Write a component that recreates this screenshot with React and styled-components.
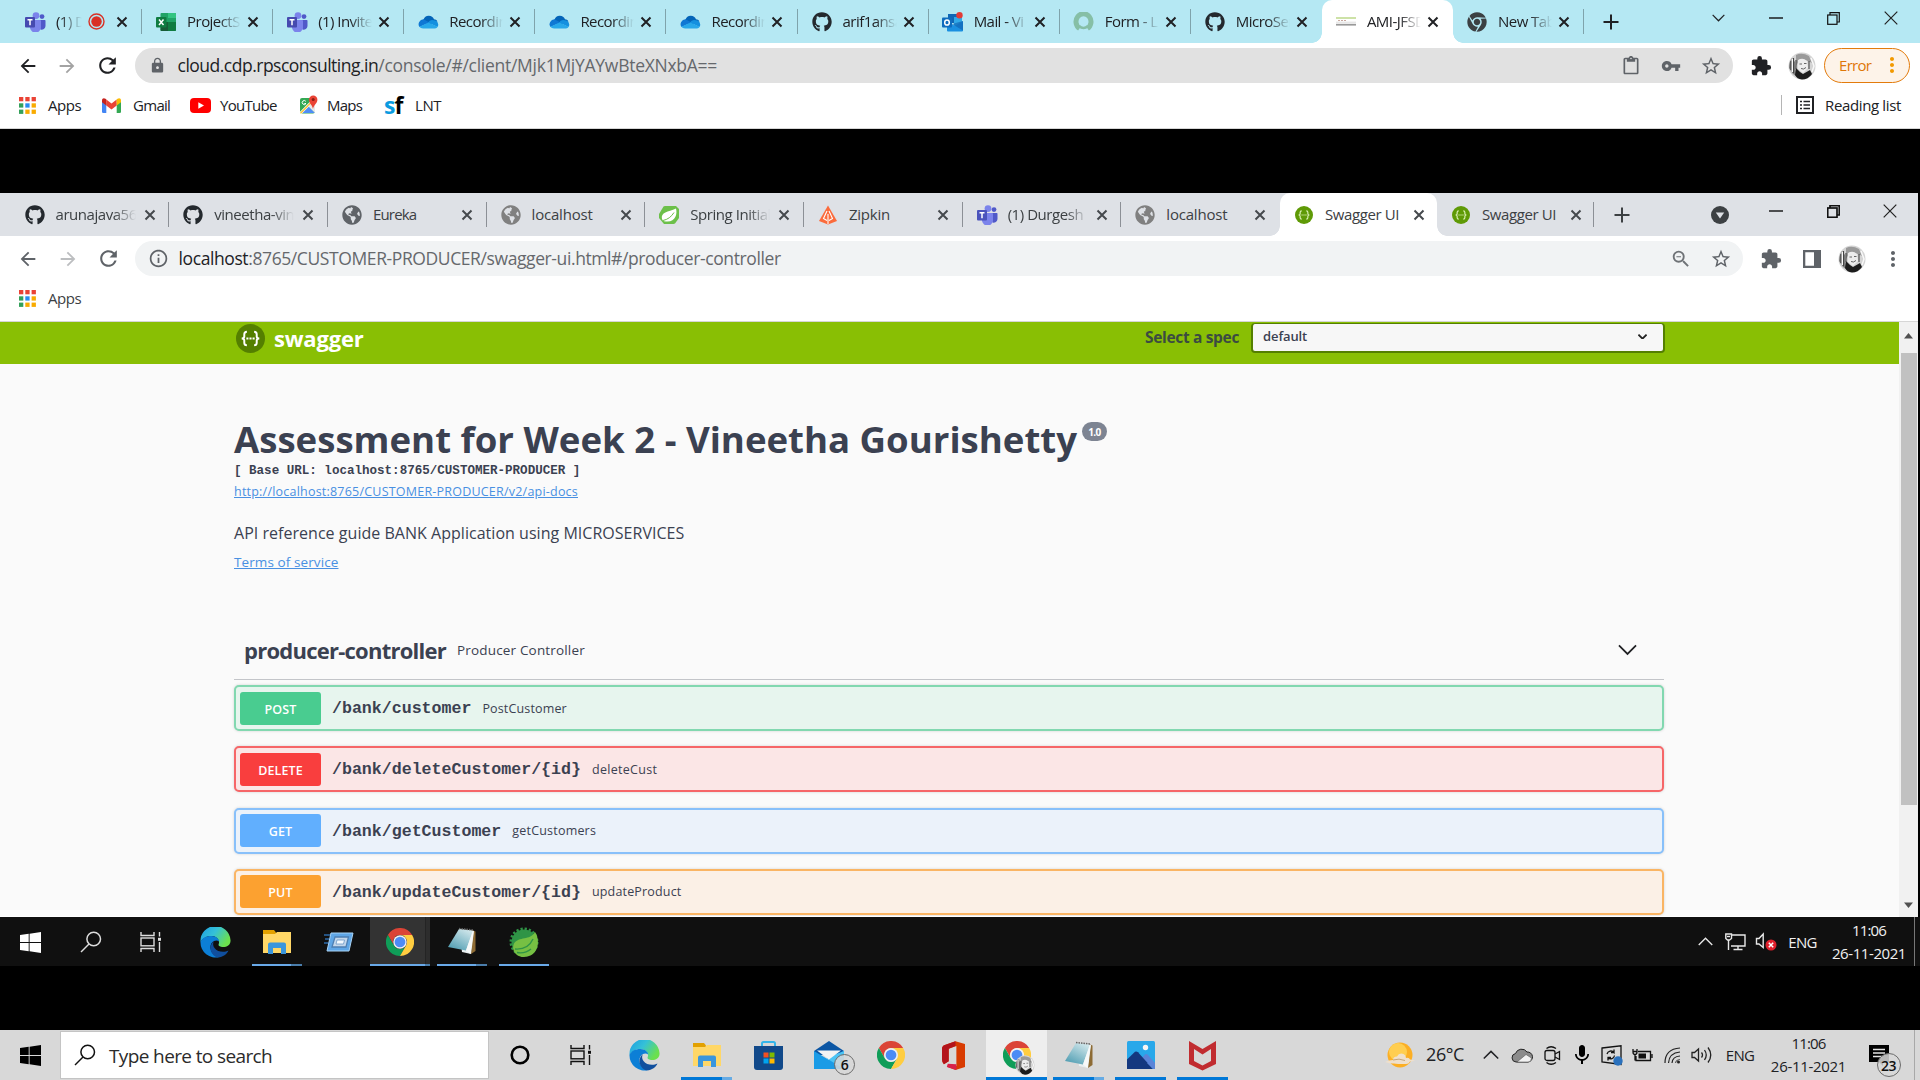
import React from "react";
import styled, { createGlobalStyle } from "styled-components";
import { FaGithub, FaChrome, FaGlobeAmericas } from "react-icons/fa";
import {
  MdLock, MdStarBorder, MdVpnKey, MdExtension, MdMoreVert, MdInfoOutline, MdZoomOut,
  MdContentPaste, MdArrowBack, MdArrowForward, MdRefresh, MdMic,
} from "react-icons/md";

const Global = createGlobalStyle`
  * { box-sizing: border-box; }
  html, body { margin: 0; padding: 0; background: #000; }
  body { font-family: "Open Sans", "Noto Sans", sans-serif; overflow: hidden; }
  svg { display: block; flex: none; }
`;

/* ---------- shared pieces ---------- */
const Screen = styled.div`
  width: 1920px;
  height: 1080px;
  display: flex;
  flex-direction: column;
  background: #000;
  overflow: hidden;
`;
const Text = styled.span`
  font-size: ${(p) => p.$size || 15}px;
  letter-spacing: ${(p) => p.$ls ?? -0.45}px;
  font-weight: ${(p) => p.$weight || 400};
  color: ${(p) => p.$color || "#202124"};
  line-height: 1.2;
  white-space: pre;
`;
const Cell = styled.div`
  display: flex;
  align-items: center;
  justify-content: center;
  flex: none;
  width: ${(p) => p.$w}px;
  color: ${(p) => p.$color || "inherit"};
  font-size: ${(p) => p.$size || 20}px;
`;
const Spacer = styled.div`
  flex: 1;
`;

/* ---------- browser windows ---------- */
const Browser = styled.section`
  display: flex;
  flex-direction: column;
  flex: none;
  width: ${(p) => p.$w || 1920}px;
  height: ${(p) => p.$h}px;
  background: #fff;
  overflow: hidden;
`;
const TabStrip = styled.div`
  display: flex;
  flex: none;
  height: 43px;
  padding-left: ${(p) => p.$pl || 11}px;
  background: ${(p) => p.$bg};
`;
const Tab = styled.div`
  position: relative;
  display: flex;
  align-items: center;
  flex: none;
  width: ${(p) => p.$w}px;
  height: 43px;
  padding-left: 12px;
  background: ${(p) => (p.$active ? "#fff" : "transparent")};
  border-radius: 10px 10px 0 0;
  ${(p) => p.$line && `
    &::after {
      content: "";
      position: absolute;
      right: 0;
      top: 9px;
      width: 1px;
      height: 25px;
      background: ${p.$lineColor};
    }
  `}
  ${(p) => p.$active && `
    &::before, &::after {
      content: "";
      position: absolute;
      bottom: 0;
      width: 10px;
      height: 10px;
    }
    &::before { left: -10px; background: radial-gradient(circle at 0 0, transparent 9.5px, #fff 10px); }
    &::after { right: -10px; background: radial-gradient(circle at 100% 0, transparent 9.5px, #fff 10px); }
  `}
`;
const TabIcon = styled.span`
  display: flex;
  justify-content: center;
  width: 24px;
  margin-right: 9px;
  font-size: 20px;
  color: ${(p) => p.$color || "#24292e"};
`;
const TabLabel = styled.div`
  width: ${(p) => p.$w}px;
  height: 22px;
  overflow: hidden;
  font-size: 15px;
  line-height: 20px;
  letter-spacing: ${(p) => p.$ls ?? -0.55}px;
  white-space: nowrap;
  color: ${(p) => p.$color || "#202124"};
  -webkit-mask-image: ${(p) => (p.$fade ? "linear-gradient(to right, #000 calc(100% - 22px), transparent)" : "none")};
  mask-image: ${(p) => (p.$fade ? "linear-gradient(to right, #000 calc(100% - 22px), transparent)" : "none")};
`;
const CloseSlot = styled.span`
  display: flex;
  justify-content: center;
  width: 12px;
  margin-left: ${(p) => p.$gap}px;
`;
const WindowControls = styled.div`
  display: flex;
  height: 36px;
`;
const Toolbar = styled.div`
  display: flex;
  align-items: center;
  flex: none;
  height: 45px;
  padding-left: 8px;
  background: #fff;
`;
const Omnibox = styled.div`
  display: flex;
  align-items: center;
  flex: none;
  width: ${(p) => p.$w}px;
  height: 35px;
  margin-left: 7px;
  padding: 0 2px 0 12px;
  border-radius: 18px;
  background: ${(p) => p.$bg};
`;
const Url = styled.div`
  margin-left: ${(p) => p.$ml}px;
  padding-bottom: 2px;
  font-size: 17.5px;
  line-height: 24px;
  letter-spacing: ${(p) => p.$ls}px;
  white-space: nowrap;
  color: #65686c;
  b { font-weight: 400; color: #202124; letter-spacing: ${(p) => p.$hostLs}px; }
`;
const ErrorPill = styled.div`
  display: flex;
  align-items: center;
  justify-content: space-between;
  width: 86px;
  height: 35px;
  margin-left: 9px;
  padding: 0 7px 2px 14px;
  border: 1.5px solid #e37b0c;
  border-radius: 18px;
  background: #fdf3e9;
`;
const Bookmarks = styled.div`
  display: flex;
  align-items: center;
  flex: none;
  height: ${(p) => p.$h}px;
  padding: 0 0 ${(p) => p.$pb}px 19px;
  border-bottom: 1px solid #d6d6d6;
  background: #fff;
`;
const Bookmark = styled.div`
  display: flex;
  align-items: center;
  gap: ${(p) => p.$gap || 12}px;
  width: ${(p) => p.$w}px;
`;
const ReadingList = styled.div`
  display: flex;
  align-items: center;
  gap: 11px;
  width: 139px;
  height: 20px;
  padding-left: 14px;
  border-left: 1px solid #b5b5b5;
`;
const BlackBand = styled.div`
  flex: none;
  height: ${(p) => p.$h}px;
  background: #000;
`;

/* ---------- swagger page ---------- */
const PageRow = styled.div`
  display: flex;
  flex: 1;
  min-height: 0;
`;
const Page = styled.main`
  flex: none;
  width: 1899px;
  height: 594px;
  background: #fafafa;
  overflow: hidden;
`;
const TopBar = styled.header`
  display: flex;
  align-items: flex-start;
  height: 42px;
  padding: 1px 234px 0 236px;
  background: #89bf04;
`;
const Brand = styled.div`
  display: flex;
  align-items: center;
  gap: 9px;
  padding-top: 1px;
`;
const SpecLabel = styled.div`
  width: 106px;
  padding-top: 3px;
`;
const SpecSelect = styled.div`
  display: flex;
  align-items: center;
  justify-content: space-between;
  width: 414px;
  height: 30px;
  padding: 0 16px 2px 10px;
  border: 2px solid #547f00;
  border-top-width: 1px;
  border-radius: 4px;
  background: #f7f7f7;
`;
const Content = styled.div`
  width: 1430px;
  margin-left: 234px;
  padding-top: 50px;
`;
const TitleRow = styled.div`
  display: flex;
  align-items: flex-start;
  height: 50px;
`;
const Title = styled.h1`
  margin: 0;
  font-size: 36.6px;
  line-height: 50px;
  font-weight: 700;
  color: #3b4151;
  white-space: nowrap;
`;
const Version = styled.span`
  display: flex;
  align-items: center;
  justify-content: center;
  width: 25px;
  height: 19px;
  margin: 8px 0 0 5px;
  border-radius: 10px;
  background: #7d8492;
  color: #fff;
  font-size: 10px;
  font-weight: 700;
  letter-spacing: -0.6px;
`;
const BaseUrl = styled.pre`
  margin: 0 0 5px;
  font: 700 12.55px/14px "Liberation Mono", "DejaVu Sans Mono", monospace;
  color: #3b4151;
`;
const Link = styled.a`
  display: block;
  font-size: ${(p) => p.$size}px;
  line-height: 18px;
  letter-spacing: ${(p) => p.$ls}px;
  color: #4990e2;
  text-decoration: underline;
`;
const Description = styled.p`
  margin: 21px 0 9px;
  font-size: 16px;
  line-height: 22px;
  letter-spacing: 0.03px;
  color: #3b4151;
`;
const TagHeader = styled.div`
  display: flex;
  align-items: center;
  height: 59px;
  margin-top: 50px;
  padding: 0 27px 0 10px;
  border-bottom: 1px solid #c3c5c9;
`;
const OpList = styled.div`
  display: flex;
  flex-direction: column;
  gap: 15.3px;
  padding-top: 5px;
`;
const Operation = styled.div`
  display: flex;
  align-items: center;
  flex: none;
  height: 46px;
  padding-left: 4px;
  border: 2px solid ${(p) => p.$border};
  border-radius: 5px;
  background: ${(p) => p.$bg};
  box-shadow: 0 0 3px rgba(0, 0, 0, 0.16);
`;
const Method = styled.span`
  display: flex;
  align-items: center;
  justify-content: center;
  width: 81px;
  height: 33px;
  padding-top: 2px;
  border-radius: 3px;
  background: ${(p) => p.$bg};
  color: #fff;
  font-size: 12.5px;
  font-weight: 600;
  letter-spacing: 0.1px;
`;
const Path = styled.span`
  margin: 2px 11px 0 11px;
  font: 700 16.6px/20px "Liberation Mono", "DejaVu Sans Mono", monospace;
  color: #3b4151;
`;
const ScrollTrack = styled.div`
  display: flex;
  flex-direction: column;
  align-items: center;
  justify-content: space-between;
  width: 19px;
  background: #f1f1f1;
`;
const ScrollThumb = styled.div`
  width: 16px;
  height: 452px;
  margin-bottom: 84px;
  background: #c1c1c1;
`;
const ScrollButton = styled.div`
  display: flex;
  align-items: center;
  justify-content: center;
  height: ${(p) => p.$h}px;
`;

/* ---------- task bars ---------- */
const Taskbar = styled.footer`
  display: flex;
  align-items: stretch;
  flex: none;
  height: ${(p) => p.$h}px;
  background: ${(p) => p.$bg};
`;
const TaskItem = styled.div`
  display: flex;
  flex-direction: column;
  align-items: center;
  justify-content: flex-end;
  flex: none;
  width: ${(p) => p.$w}px;
  margin-left: ${(p) => p.$ml || 0}px;
  background: ${(p) => p.$bg || "transparent"};
`;
const TaskIcon = styled.div`
  position: relative;
  display: flex;
  align-items: center;
  justify-content: center;
  flex: 1;
  padding-top: ${(p) => p.$pt ?? 2}px;
`;
const Underline = styled.div`
  flex: none;
  width: 100%;
  height: ${(p) => p.$h}px;
  background: linear-gradient(to right, ${(p) => p.$a} ${(p) => p.$split || 100}%, ${(p) => p.$b || p.$a} ${(p) => p.$split || 100}%);
`;
const CountBadge = styled.span`
  position: absolute;
  right: ${(p) => p.$r}px;
  bottom: ${(p) => p.$bt}px;
  display: flex;
  align-items: center;
  justify-content: center;
  width: ${(p) => p.$d}px;
  height: ${(p) => p.$d}px;
  border: 1px solid #6b6b6b;
  border-radius: 50%;
  background: rgba(216, 216, 216, 0.85);
  color: #111;
  font-size: ${(p) => p.$size}px;
  font-weight: 600;
  letter-spacing: -0.6px;
`;
const AvatarBadge = styled.span`
  position: absolute;
  right: -4px;
  bottom: 2px;
`;
const SearchBox = styled.div`
  display: flex;
  align-items: center;
  width: 429px;
  margin: 0.5px 0 1px;
  padding-left: 13px;
  border: 1px solid #c4c4c4;
  background: #fff;
`;
const SearchHint = styled.span`
  margin-left: 13px;
  padding-top: 2px;
  font-size: 19px;
  letter-spacing: -0.62px;
  color: #2b2b2b;
`;
const Clock = styled.div`
  display: flex;
  flex-direction: column;
  align-items: center;
  justify-content: center;
  gap: 5px;
  width: ${(p) => p.$w}px;
  padding-bottom: 1px;
`;
const ShowDesktop = styled.div`
  width: 6px;
  margin-left: ${(p) => p.$ml || 0}px;
  border-left: 1px solid ${(p) => p.$c};
`;

/* ---------- drawings ---------- */
const Close = ({ c = "#202124" }) => (
  <svg width="12" height="12" viewBox="0 0 12 12" stroke={c} strokeWidth="2"><path d="M1.5 1.5 10.5 10.5M10.5 1.5 1.5 10.5" /></svg>
);
const Plus = ({ c = "#202124" }) => (
  <svg width="16" height="16" viewBox="0 0 16 16" stroke={c} strokeWidth="2"><path d="M8 .5V15.5M.5 8H15.5" /></svg>
);
const Teams = ({ light }) => (
  <svg width="22" height="20" viewBox="0 0 22 20">
    <circle cx="18" cy="4.6" r="2.4" fill="#5059c9" />
    <circle cx="12" cy="3.6" r="3.4" fill="#7b83eb" />
    <path d="M14 8h6.5c.6 0 1 .4 1 1v5a4 4 0 0 1-5 3.6z" fill="#5059c9" />
    <path d="M6 8h10c.5 0 1 .4 1 1v6.200a5.500 5.500 0 0 1-11 0z" fill="#7b83eb" />
    <rect x="1" y="5" width="10" height="10.500" rx="1" fill={light ? "#4b53bc" : "#464ab0"} />
    <path d="M3.500 7.800H8.500M6 7.800V13.200" stroke="#fff" strokeWidth="1.500" fill="none" />
  </svg>
);
const Excel = () => (
  <svg width="20" height="20" viewBox="0 0 20 20">
    <rect x="4.500" y="1" width="15.500" height="18" rx="1" fill="#21a366" />
    <path d="M12 1h7a1 1 0 0 1 1 1v4h-8z" fill="#33c481" /><path d="M4.500 10H12v9H5.500a1 1 0 0 1-1-1z" fill="#185c37" />
    <path d="M12 10h8v8a1 1 0 0 1-1 1h-7z" fill="#107c41" />
    <rect y="5" width="10.500" height="10.500" rx="1" fill="#107c41" />
    <path d="M3 7.500 7.500 13M7.500 7.500 3 13" stroke="#fff" strokeWidth="1.500" />
  </svg>
);
const OneDrive = () => (
  <svg width="21" height="14" viewBox="0 0 21 14">
    <path d="M5.500 4.500A5.600 5.600 0 0 1 16 4.200a5 5 0 0 1 3.500 2L12 10 3 6z" fill="#0364b8" />
    <path d="M5.500 4.300a4.900 4.900 0 0 0-4 7.700l10-4.500z" fill="#0f78d4" />
    <path d="M15.800 5.200a4.400 4.400 0 0 1 3.700 6.800L10 7.500a5 5 0 0 1 5.800-2.300z" fill="#1490df" />
    <path d="M1.300 11.800 10.500 7.500l9.200 4.200A3.800 3.800 0 0 1 17 13.500H5a5 5 0 0 1-3.700-1.700z" fill="#28a8ea" />
  </svg>
);
const Outlook = () => (
  <svg width="21" height="20" viewBox="0 0 21 20">
    <path d="M6 2h11v9H6z" fill="#1066b5" /><path d="M12 5h8v9h-8z" fill="#32a9e7" />
    <path d="M5 9l8 5 8-5v9.500a1 1 0 0 1-1 1H6a1 1 0 0 1-1-1z" fill="#1a8fe0" /><path d="M21 9v9.500L10 12z" fill="#0f5fae" opacity=".6" />
    <rect y="5.500" width="10" height="10" rx="1" fill="#0f6cbd" /><ellipse cx="5" cy="10.500" rx="2.300" ry="2.600" stroke="#fff" strokeWidth="1.500" fill="none" />
    <circle cx="17.500" cy="3.200" r="3.200" fill="#e23b36" />
  </svg>
);
const FormRing = () => (
  <svg width="21" height="19" viewBox="0 0 21 19"><path d="M6.500 16.500A7.500 8 0 1 1 14.500 16.500" stroke="#86bfa6" strokeWidth="5" fill="none" /><path d="M6 14Q10.500 18 15 14" stroke="#86bfa6" strokeWidth="2.500" fill="none" /></svg>
);
const AmiLogo = () => (
  <svg width="20" height="9" viewBox="0 0 20 9"><path d="M0 1H20" stroke="#bcd98a" strokeWidth="1.500" /><path d="M2 3.500H11" stroke="#c9a9a0" strokeDasharray="2 1" /><path d="M0 5.200H20" stroke="#ddd" /><path d="M0 7.700H20" stroke="#999" strokeWidth="1.800" /></svg>
);
const Apps = () => {
  const cs = ["#ea4335", "#ea4335", "#ea4335", "#34a05a", "#2b8cf0", "#f9ab00", "#34a05a", "#f9ab00", "#f9ab00"];
  return (
    <svg width="17" height="17" viewBox="0 0 17 17">
      {cs.map((c, i) => <rect key={i} x={(i % 3) * 6.300} y={Math.floor(i / 3) * 6.300} width="4.300" height="4.300" fill={c} />)}
    </svg>
  );
};
const Gmail = () => (
  <svg width="19" height="15" viewBox="0 0 19 15">
    <path d="M0 2.500V13.700A1.300 1.300 0 0 0 1.300 15H4.300V5z" fill="#4285f4" /><path d="M14.700 5V15h3a1.300 1.300 0 0 0 1.300-1.300V2.500z" fill="#34a853" />
    <path d="M4.300 1.500V7.500L9.500 11.500 14.700 7.500V1.500L9.500 5.500z" fill="#ea4335" /><path d="M0 2.200C0 .2 2 -.4 3.500.8l.8.7v6L0 4.200z" fill="#c5221f" /><path d="M19 2.200C19 .2 17 -.4 15.500.8l-.8.7v6L19 4.200z" fill="#fbbc04" />
  </svg>
);
const YouTube = () => (
  <svg width="21" height="15" viewBox="0 0 21 15"><rect width="21" height="15" rx="4" fill="#f00" /><path d="M8.300 4.200 14 7.500 8.300 10.800z" fill="#fff" /></svg>
);
const Maps = () => (
  <svg width="19" height="20" viewBox="0 0 19 20">
    <rect x="1" y="3" width="15" height="15.500" rx="2" fill="#34a853" /><path d="M1.500 18 9 10.500 16 18z" fill="#4e8df5" />
    <path d="M1.500 18.200 16 3.500" stroke="#fff" strokeWidth="2.600" /><path d="M1.500 18.200 16 3.500" stroke="#fbc02d" strokeWidth="1.300" /><path d="M9 11l7 7V8z" fill="#e8e8e8" />
    <path d="M14 14C13.500 10 10 8.500 10 4.700a4.200 4.200 0 0 1 8.400 0C18.400 8.500 14.500 10 14 14z" fill="#ea4335" /><circle cx="14.200" cy="4.600" r="1.500" fill="#8c1d14" />
    <path d="M6.800 6.300A2 2 0 1 0 7 8.500H5.300" stroke="#fff" fill="none" strokeWidth="1" />
  </svg>
);
const SfBox = styled.span`
  display: flex;
  align-items: baseline;
  width: 20px;
  font: 700 23px/20px "Open Sans", sans-serif;
  letter-spacing: -1px;
  color: #000;
  i { font-style: normal; color: #0a9be0; }
`;
const ReadIcon = () => (
  <svg width="18" height="18" viewBox="0 0 18 18" fill="none" stroke="#202124" strokeWidth="2"><rect x="1" y="1" width="16" height="16" /><path d="M4 5.500H6M4 9H6M4 12.500H6M7.500 5.500H14M7.500 9H14M7.500 12.500H14" strokeWidth="1.700" /></svg>
);
const Avatar = ({ d = 28 }) => (
  <svg width={d} height={d} viewBox="0 0 28 28">
    <circle cx="14" cy="14" r="13.500" fill="#d4d4d4" />
    <path d="M4 6Q1 10 1 16L5 22 8 24 7 10z" fill="#7d7d7d" /><path d="M8 3Q14 0 21 4L24 11 20 9 12 7 8 14z" fill="#9a9a9a" />
    <path d="M10 8Q15 5 19 9L20 16 15 21 10 17z" fill="#ededed" /><path d="M8 16L12 20 15 22 22 18 24 22Q20 27.500 14 27.500 9 27 7 23z" fill="#1c1c1c" />
    <path d="M11.500 12h2.500M16 11.500h2.500M13 16.500Q15.500 18 18 15.500" stroke="#666" strokeWidth="1" fill="none" />
    <path d="M3 9V18M5.500 6V21M8 8V17M21 9V17" stroke="#444" strokeWidth="1.100" fill="none" /><path d="M4.300 7V20M23 6 26 14 24 20" stroke="#fafafa" strokeWidth="1.400" fill="none" />
  </svg>
);
const ChevronThin = ({ c = "#202124", w = 14, up, s = 1.300 }) => (
  <svg width={w} height={w * 0.6} viewBox="0 0 14 8.400" fill="none" stroke={c} strokeWidth={s}><path d={up ? "M.7 7.500 7 1.200 13.300 7.500" : "M.7 1 7 7.300 13.300 1"} /></svg>
);
const Minimize = () => (<svg width="14" height="2" viewBox="0 0 14 2"><rect width="14" height="1.400" y=".3" fill="#111" /></svg>);
const Restore = ({ s = 1.200 }) => (
  <svg width="13" height="13" viewBox="0 0 13 13" fill="none" stroke="#111" strokeWidth={s}><rect x=".7" y="3" width="9.300" height="9.300" /><path d="M3 3V.7H12.300V10H10" /></svg>
);
const BigX = () => (<svg width="14" height="14" viewBox="0 0 14 14" stroke="#222" strokeWidth="1.200"><path d="M.7.7 13.300 13.300M13.300.7.7 13.300" /></svg>);
const RecordDot = () => (<svg width="17" height="17" viewBox="0 0 17 17"><circle cx="8.500" cy="8.500" r="7.500" fill="none" stroke="#d93025" strokeWidth="1.400" /><circle cx="8.500" cy="8.500" r="5.200" fill="#d93025" /></svg>);
const SpringHex = () => (
  <svg width="20" height="20" viewBox="0 0 20 20"><path d="M4.500 1.500Q5 1 6 1H17L20 4V13L16 18.500 14.500 19H5L0 13V9z" fill="#6cc04a" /><path d="M3 14C1.500 7 9 7 17 3.500 18.500 9 16.500 16.500 8.500 16.500 6 16.500 4 16.500 3 14z" fill="#fff" /><path d="M4 15.500Q11 14 15 7.500" stroke="#6cc04a" fill="none" strokeWidth="1" /></svg>
);
const Zipkin = () => (
  <svg width="18" height="20" viewBox="0 0 18 20" fill="none"><path d="M9 .5 18 16 9 19.500 0 16z" fill="#fb6b3c" /><path d="M8 6 4.500 13.500 8 15.500M10 6 13.500 13.500 10 15.500M9 9V19" stroke="#fff" strokeWidth="1.100" /></svg>
);
const SwaggerIcon = ({ d = 18, bg = "#5f9a06", fg = "#d7eeb0" }) => (
  <svg width={d} height={d} viewBox="0 0 28 28"><circle cx="14" cy="14" r="14" fill={bg} /><path d="M10.500 7.500Q8 7.500 8 10V12Q8 14 5.500 14 8 14 8 16V18Q8 20.500 10.500 20.500M17.500 7.500Q20 7.500 20 10V12Q20 14 22.500 14 20 14 20 16V18Q20 20.500 17.500 20.500" fill="none" stroke={fg} strokeWidth="1.900" /><path d="M10 14H18" stroke={fg} strokeWidth="1.900" strokeDasharray="2 1" /></svg>
);
const DownCircle = () => (<svg width="18" height="18" viewBox="0 0 18 18"><circle cx="9" cy="9" r="9" fill="#3c4043" /><path d="M4.800 6.500H13.200L9 12.500z" fill="#dee1e6" /></svg>);
const SidePanel = () => (<svg width="18" height="18" viewBox="0 0 18 18"><path d="M0 0H18V18H0zM2.300 2.300V15.700H11V2.300z" fill="#5f6368" fillRule="evenodd" /></svg>);
const Triangle = ({ up }) => (<svg width="9" height="6" viewBox="0 0 9 6"><path d={up ? "M0 5.500H9L4.500 0z" : "M0 .5H9L4.500 6z"} fill="#505050" /></svg>);

const Windows = ({ c }) => (<svg width="21" height="21" viewBox="0 0 21 21" fill={c}><path d="M0 3 8.700 1.800V10H0zM9.600 1.700 21 0V10H9.600zM0 11H8.700V19.200L0 18zM9.600 11H21V21L9.600 19.300z" /></svg>);
const Search = ({ c }) => (<svg width="22" height="22" viewBox="0 0 22 22" fill="none" stroke={c} strokeWidth="1.500"><circle cx="13.700" cy="8" r="6.800" /><path d="M9 13 1 21" /></svg>);
const TaskView = ({ c }) => (<svg width="22" height="20" viewBox="0 0 22 20" fill="none" stroke={c} strokeWidth="1.400"><path d="M1 0V3.500H14V0M1 20V16.500H14V20M19.500 0V4.500M19.500 10V20" /><rect x="1" y="6" width="13" height="7.800" /><rect x="18" y="5.800" width="3" height="3" fill={c} stroke="none" /></svg>);
const Edge = () => (
  <svg width="31" height="31" viewBox="0 0 31 31">
    <defs>
      <linearGradient id="edgeTop" x1="0" x2="1" y1="0" y2=".5"><stop offset="0" stopColor="#1b9de2" /><stop offset=".5" stopColor="#35c1d8" /><stop offset="1" stopColor="#6be04d" /></linearGradient>
    </defs>
    <path d="M.5 15A15 15 0 0 1 30.500 13C31 18.500 26 20.500 22 20 17.500 19.500 18.500 17.500 19 16 19.500 13 16.500 9 11.500 9 6 9 2 12 .5 15z" fill="url(#edgeTop)" />
    <path d="M.5 15C2 11 6 9 11.500 9 16 9 19 12 19.200 14.500 18 13.500 16 13 14 14 10 16 9 22 13 26.500 15 29 18.500 30 19.500 30A15 15 0 0 1 .5 15z" fill="#0c7fd6" />
    <path d="M14 14C9 18 9 26 16 30 21 31.500 27 27.500 28.500 23.500 24 26 17.500 25 14.500 21 12.500 18 13 15.500 14 14z" fill="#104f9e" />
  </svg>
);
const Folder = () => (
  <svg width="28" height="24" viewBox="0 0 28 24"><path d="M0 0H11L13 2.500V6H0z" fill="#e2a000" /><path d="M0 4 12 4 14 2H28V23H0z" fill="#ffd767" /><path d="M5 24V14.500Q5 12.500 7 12.500H21Q23 12.500 23 14.500V24H18V18H10V24z" fill="#3a96dd" /></svg>
);
const RunIcon = () => (
  <svg width="30" height="20" viewBox="0 0 30 20"><path d="M7 1H29L25 19H3z" fill="#5fa6e6" stroke="#a8d4f7" /><path d="M11 5H24.500L22 15H8z" fill="#c3d6ea" stroke="#4d7fb3" strokeWidth="1.300" /><path d="M13 8H20.500L19.500 12H12z" fill="#f4faff" stroke="#6b98c6" strokeWidth=".8" /><path d="M0 3H6M1 7H5M0 11H4" stroke="#2c6aa8" strokeWidth="1.300" /></svg>
);
const Chrome = ({ d = 28 }) => (
  <svg width={d} height={d} viewBox="0 0 24 24"><path d="M1.600 6A12 12 0 0 1 22.400 6H12A6 6 0 0 0 6.800 15z" fill="#db4437" /><path d="M1.600 6A12 12 0 0 0 12 24L17.200 15A6 6 0 0 1 6.800 15z" fill="#0f9d58" /><path d="M22.400 6A12 12 0 0 1 12 24L17.200 15A6 6 0 0 0 12 6z" fill="#ffcd40" /><circle cx="12" cy="12" r="5.800" fill="#f1f1f1" /><circle cx="12" cy="12" r="4.600" fill="#4c8bf5" /></svg>
);
const Notepad = () => (
  <svg width="28" height="28" viewBox="0 0 28 28">
    <defs><linearGradient id="padFace" x1=".8" x2=".2" y1="0" y2="1"><stop offset="0" stopColor="#d3e8ec" /><stop offset="1" stopColor="#4f9db2" /></linearGradient></defs>
    <path d="M24 3 27.500 4.500V24L23 27z" fill="#8d6b34" /><path d="M11 2 26 4 23 27 14 25z" fill="#e9eff0" />
    <path d="M11 2 25 3.500 18 23.500 0 20z" fill="url(#padFace)" /><path d="M18 23.500 22.500 27 25.500 5 25 3.500z" fill="#f7f9f9" /><path d="M11 1.500 25 3" stroke="#666" strokeDasharray="1.500 1" strokeWidth="1.500" />
  </svg>
);
const SpringTool = () => (
  <svg width="30" height="30" viewBox="0 0 30 30"><circle cx="15" cy="15" r="13" fill="none" stroke="#2f9446" strokeWidth="3" strokeDasharray="2.200 1.900" /><circle cx="15" cy="15" r="12.500" fill="#2f9446" /><path d="M26 5C31 12 31 29 15 30 7 30 2 23 5 16.500 10 9 21 14 26 5z" fill="#76c043" /><path d="M6 22Q19 23 24 12M8 25.500Q16 27 22 22" stroke="#2f9446" strokeWidth="1.400" fill="none" /></svg>
);
const Monitor = () => (<svg width="21" height="18" viewBox="0 0 21 18" fill="none" stroke="#e8e8e8" strokeWidth="1.400"><path d="M7 2H20V13H6M13 13V16.500M8.500 16.500H17.500M3.500 7V17" /><path d="M.8 1H6.500V5.500L4.500 7H2.500L.8 5.500z" /><path d="M2 3.500H5" /></svg>);
const Muted = () => (<svg width="22" height="19" viewBox="0 0 22 19"><path d="M1.500 6.500H4L8.200 2V15.500L4 12H1.500z" fill="none" stroke="#e8e8e8" strokeWidth="1.400" /><circle cx="16" cy="13" r="5.500" fill="#e0202c" /><path d="M13.800 10.800 18.200 15.200M18.200 10.800 13.800 15.200" stroke="#fff" strokeWidth="1.500" /></svg>);
const Store = () => (
  <svg width="29" height="30" viewBox="0 0 29 30"><path d="M8 6V2.500Q8 1 9.500 1H19.500Q21 1 21 2.500V6" fill="none" stroke="#33b5ea" strokeWidth="2" /><path d="M0 5H29V26Q29 29 26 29H3Q0 29 0 26z" fill="#11498a" /><path d="M9.500 11.500h5v5h-5z" fill="#f25022" /><path d="M15.500 11.500h5v5h-5z" fill="#7fba00" /><path d="M9.500 17.500h5v5h-5z" fill="#00a4ef" /><path d="M15.500 17.500h5v5h-5z" fill="#ffb900" /></svg>
);
const MailIcon = () => (
  <svg width="30" height="28" viewBox="0 0 30 28"><path d="M0 10 15 0 30 10V14H0z" fill="#0b56a4" /><path d="M0 10 15 19 30 10V28H0z" fill="#1a9be6" /><path d="M30 10V28L12 17z" fill="#4cc4f5" /><path d="M3 9.500H27L15 18.500z" fill="#f4f4f4" /></svg>
);
const Office = () => (
  <svg width="23" height="29" viewBox="0 0 24 30"><path d="M14 0 24 3V27L14 30 6 27 15 26V5L7 8V21L2 24Q0 22 0 19V8Q0 5 3 4z" fill="#d83b01" /><path d="M14 0 14 5 7 8V21L2 24Q0 22 0 19V8Q0 5 3 4z" fill="#b3131b" /><path d="M6 23.500 15 24V30L5 27z" fill="#d8214a" /></svg>
);
const Photos = () => (
  <svg width="28" height="28" viewBox="0 0 28 28"><rect width="28" height="28" rx="1.500" fill="#28a8ea" /><path d="M28 22V24L20 28 14 18 18 13.500Q19.500 12.500 21 14z" fill="#5b84d8" /><path d="M0 18.500 8 10.800Q9.500 10 11 11.300L26 28H0z" fill="#14387f" /><path d="M20 22 28 22V28H26z" fill="#5b84d8" /><circle cx="18.500" cy="6.500" r="2.700" fill="#f4f4f4" /></svg>
);
const McAfee = () => (<svg width="27" height="31" viewBox="0 0 27 31"><path d="M0 1 13.500 9 27 1V24L13.500 30.500 0 24zM5 9V21L13.500 25.500 22 21V9L13.500 14.500z" fill="#c12c30" fillRule="evenodd" /></svg>);
const Weather = () => (
  <svg width="30" height="27" viewBox="0 0 30 27"><circle cx="15" cy="13" r="12.500" fill="#fcaf24" /><circle cx="13" cy="10" r="9" fill="#ffd458" opacity=".85" /><path d="M0 20Q4 18 8 18 8 14.500 12 14.500 14 10.500 18.500 12 21 13 21 16 24 15 25 17.500L30 18.500Q28 19.500 25 19.500 24 22.500 20 22 12 22 9 21.500 6 22 0 20z" fill="#efe0cc" /><path d="M8 18Q14 16 20 18.500" stroke="#c4a57c" fill="none" /></svg>
);
const Cloud = () => (<svg width="22" height="15" viewBox="0 0 22 15"><path d="M5 14A4.300 4.300 0 0 1 4.500 5.500 6.500 6.500 0 0 1 16 4 5 5 0 0 1 17 14z" fill="#8b8b8b" stroke="#222" /><path d="M6 14 15 6.500 20.500 10Q20.500 14 17 14z" fill="#f2f2f2" stroke="#555" strokeWidth=".6" /></svg>);
const Camera = () => (<svg width="17" height="19" viewBox="0 0 17 19" fill="none" stroke="#111" strokeWidth="1.300"><rect x="1" y="4.500" width="10" height="10" rx="2" /><path d="M11 8 15.500 5.500V13.500L11 11M2.500 2.500Q7 -1 12 2.500M2.500 16.500Q7 20 12 16.500" /></svg>);
const Update = () => (<svg width="22" height="21" viewBox="0 0 22 21"><path d="M1 3 20 .8V19.500L1 17z" fill="none" stroke="#111" strokeWidth="1.300" /><path d="M6 9A4 4 0 0 1 13 7.500V4.500M13 7.500H10M13.500 10.500A4 4 0 0 1 7 13V15.500M7 12.500H10" fill="none" stroke="#111" strokeWidth="1.300" /><circle cx="17" cy="16" r="4.700" fill="#2a71bd" /></svg>);
const Battery = () => (<svg width="21" height="15" viewBox="0 0 21 15" fill="none" stroke="#111" strokeWidth="1.300"><path d="M6 3.500H18.500V12.500H4V8M20 6V10M1 1V4Q1 6.500 3 6.500T5 4V1M1 3.500H5M3 6.500V12.500" /><rect x="6.500" y="5.500" width="7.500" height="5" fill="#111" stroke="none" /></svg>);
const Wifi = () => (<svg width="17" height="17" viewBox="0 0 17 17" fill="none" stroke="#222" strokeWidth="1.200"><path d="M1 16Q1 2 16 1M4.500 16Q5 6 16 5M8 16Q8.500 9.500 16 9" /><path d="M11.500 16Q12 13 16 12.500" opacity=".7" /><circle cx="14.500" cy="15" r="1.500" fill="#222" stroke="none" /></svg>);
const Speaker = () => (<svg width="22" height="18" viewBox="0 0 22 18" fill="none" stroke="#222" strokeWidth="1.300"><path d="M1 6.500H3.500L7.500 3V15L3.500 11.500H1zM10.500 6.500Q12.500 9 10.500 11.500M13.500 4Q17 9 13.500 14M17 1.500Q22.500 9 17 16.500" /></svg>);
const Notification = () => (<svg width="21" height="22" viewBox="0 0 21 22"><path d="M0 0H20V17H14V21L10 17H0z" fill="#000" /><path d="M4 4.500H16M4 8H16M4 11.500H13" stroke="#e4e4e4" strokeWidth="1.300" /></svg>);
const Cortana = () => (<svg width="20" height="20" viewBox="0 0 20 20"><circle cx="10" cy="10" r="8.300" fill="none" stroke="#000" strokeWidth="2.600" /></svg>);

/* ---------- data ---------- */
const outerTabs = [
  { icon: <Teams />, label: "(1) D", rec: true },
  { icon: <Excel />, label: "ProjectSt" },
  { icon: <Teams />, label: "(1) Invite" },
  { icon: <OneDrive />, label: "Recordin" },
  { icon: <OneDrive />, label: "Recordin" },
  { icon: <OneDrive />, label: "Recordin" },
  { icon: <FaGithub />, label: "arif1ansa" },
  { icon: <Outlook />, label: "Mail - Vi" },
  { icon: <FormRing />, label: "Form - L" },
  { icon: <FaGithub />, label: "MicroSer", noLine: true },
  { icon: <AmiLogo />, label: "AMI-JFSD", active: true },
  { icon: <FaChrome />, label: "New Tab", color: "#3c4043" },
];
const innerTabs = [
  { icon: <FaGithub />, label: "arunajava56", fade: true },
  { icon: <FaGithub />, label: "vineetha-vin", fade: true },
  { icon: <FaGlobeAmericas />, label: "Eureka", color: "#5f6368", ls: -0.8 },
  { icon: <FaGlobeAmericas />, label: "localhost", color: "#808080", ls: -0.2 },
  { icon: <SpringHex />, label: "Spring Initial", fade: true },
  { icon: <Zipkin />, label: "Zipkin", ls: -0.24 },
  { icon: <Teams light />, label: "(1) Durgesh", fade: true },
  { icon: <FaGlobeAmericas />, label: "localhost", color: "#808080", ls: -0.2, noLine: true },
  { icon: <SwaggerIcon />, label: "Swagger UI", active: true, w: 157, ls: -0.4 },
  { icon: <SwaggerIcon />, label: "Swagger UI", w: 156.5, ls: -0.4 },
];
const operations = [
  { method: "POST", path: "/bank/customer", summary: "PostCustomer", c: "#49cc90", b: "#82d8b0", bg: "#e7f5ee", ls: 0.15 },
  { method: "DELETE", path: "/bank/deleteCustomer/{id}", summary: "deleteCust", c: "#f93e3e", b: "#f66668", bg: "#fbe6e6", ls: 0.3 },
  { method: "GET", path: "/bank/getCustomer", summary: "getCustomers", c: "#61affe", b: "#88c0fa", bg: "#ebf2fa", ls: 0.2 },
  { method: "PUT", path: "/bank/updateCustomer/{id}", summary: "updateProduct", c: "#fca130", b: "#fab564", bg: "#fbf0e6", ls: 0.17 },
];

function OuterBrowser() {
  return (
    <Browser $h={129}>
      <TabStrip $bg="#b5e8f3">
        {outerTabs.map((t, i) => (
          <Tab key={i} $w={131.1} $active={t.active} $line={!t.active && !t.noLine} $lineColor="#7fa3ab">
            <TabIcon $color={t.color}>{t.icon}</TabIcon>
            <TabLabel $w={t.rec ? 26 : 54} $fade>{t.label}</TabLabel>
            {t.rec && <Cell $w={28}><RecordDot /></Cell>}
            <CloseSlot $gap={6}><Close /></CloseSlot>
          </Tab>
        ))}
        <Cell $w={54}><Plus /></Cell>
        <Spacer />
        <WindowControls>
          <Cell $w={57}><ChevronThin w={13} /></Cell>
          <Cell $w={57}><Minimize /></Cell>
          <Cell $w={58}><Restore /></Cell>
          <Cell $w={58}><BigX /></Cell>
        </WindowControls>
      </TabStrip>
      <Toolbar>
        <Cell $w={39} $size={22} $color="#202124"><MdArrowBack /></Cell>
        <Cell $w={40} $size={22} $color="#a3a3a3"><MdArrowForward /></Cell>
        <Cell $w={41} $size={25} $color="#202124"><MdRefresh /></Cell>
        <Omnibox $w={1598} $bg="#e1e1e1">
          <Cell $w={21} $size={17} $color="#5f6368"><MdLock /></Cell>
          <Url $ml={9.5} $ls={-0.27} $hostLs={-0.5}><b>cloud.cdp.rpsconsulting.in</b>/console/#/client/Mjk1MjYAYwBteXNxbA==</Url>
          <Spacer />
          <Cell $w={40} $size={20} $color="#5f6368"><MdContentPaste /></Cell>
          <Cell $w={40} $size={20} $color="#5f6368"><MdVpnKey /></Cell>
          <Cell $w={40} $size={22} $color="#5f6368"><MdStarBorder /></Cell>
        </Omnibox>
        <Cell $w={56} $size={22} $color="#202124"><MdExtension /></Cell>
        <Cell $w={26}><Avatar /></Cell>
        <ErrorPill>
          <Text $color="#df7708" $ls={-0.7}>Error</Text>
          <Cell $w={20} $size={24} $color="#f29900"><MdMoreVert /></Cell>
        </ErrorPill>
      </Toolbar>
      <Bookmarks $h={41} $pb={6}>
        <Bookmark $w={83}><Apps /><Text>Apps</Text></Bookmark>
        <Bookmark $w={88}><Gmail /><Text $ls={-0.7}>Gmail</Text></Bookmark>
        <Bookmark $w={109} $gap={9}><YouTube /><Text $ls={-0.7}>YouTube</Text></Bookmark>
        <Bookmark $w={85} $gap={9}><Maps /><Text $ls={-0.75}>Maps</Text></Bookmark>
        <Bookmark $w={80} $gap={11}><SfBox><i>s</i>f</SfBox><Text>LNT</Text></Bookmark>
        <Spacer />
        <ReadingList><Cell $w={18}><ReadIcon /></Cell><Text $ls={-0.36}>Reading list</Text></ReadingList>
      </Bookmarks>
    </Browser>
  );
}

function InnerBrowser() {
  return (
    <Browser $h={724} $w={1918}>
      <TabStrip $bg="#dee1e6" $pl={10.5}>
        {innerTabs.map((t, i) => (
          <Tab key={i} $w={t.w || 158.7} $active={t.active} $line={!t.active && !t.noLine} $lineColor="#8c9096">
            <TabIcon $color={t.color}>{t.icon}</TabIcon>
            <TabLabel $w={80} $fade={t.fade} $ls={t.ls ?? -0.45} $color="#3c4043">{t.label}</TabLabel>
            <CloseSlot $gap={8}><Close c="#45494d" /></CloseSlot>
          </Tab>
        ))}
        <Cell $w={56}><Plus c="#3c4043" /></Cell>
        <Spacer />
        <Cell $w={57}><DownCircle /></Cell>
        <WindowControls>
          <Cell $w={56}><Minimize /></Cell>
          <Cell $w={58}><Restore s={1.700} /></Cell>
          <Cell $w={56}><BigX /></Cell>
        </WindowControls>
      </TabStrip>
      <Toolbar>
        <Cell $w={39} $size={22} $color="#5f6368"><MdArrowBack /></Cell>
        <Cell $w={41} $size={22} $color="#bcbec0"><MdArrowForward /></Cell>
        <Cell $w={40} $size={25} $color="#5f6368"><MdRefresh /></Cell>
        <Omnibox $w={1608} $bg="#f1f3f4">
          <Cell $w={23} $size={21} $color="#5f6368"><MdInfoOutline /></Cell>
          <Url $ml={8.5} $ls={-0.4} $hostLs={-0.4}><b>localhost</b>:8765/CUSTOMER-PRODUCER/swagger-ui.html#/producer-controller</Url>
          <Spacer />
          <Cell $w={40} $size={22} $color="#6e7276"><MdZoomOut /></Cell>
          <Cell $w={40} $size={22} $color="#5f6368"><MdStarBorder /></Cell>
        </Omnibox>
        <Cell $w={56} $size={22} $color="#5f6368"><MdExtension /></Cell>
        <Cell $w={26}><SidePanel /></Cell>
        <Cell $w={54}><Avatar /></Cell>
        <Cell $w={28} $size={24} $color="#5f6368"><MdMoreVert /></Cell>
      </Toolbar>
      <Bookmarks $h={41} $pb={6}>
        <Bookmark><Apps /><Text $color="#3c4043">Apps</Text></Bookmark>
      </Bookmarks>
      <PageRow>
        <Page>
          <TopBar>
            <Brand>
              <SwaggerIcon d={29} bg="#547f00" fg="#fff" />
              <Text $size={22} $weight={700} $color="#fff" $ls={-0.2}>swagger</Text>
            </Brand>
            <Spacer />
            <SpecLabel><Text $size={15.5} $weight={700} $color="#3b4b41" $ls={-0.33}>Select a spec</Text></SpecLabel>
            <SpecSelect>
              <Text $size={13} $weight={600} $color="#3b4151" $ls={-0.1}>default</Text>
              <ChevronThin w={9} s={2.800} c="#222" />
            </SpecSelect>
          </TopBar>
          <Content>
            <TitleRow>
              <Title>Assessment for Week 2 - Vineetha Gourishetty</Title>
              <Version>1.0</Version>
            </TitleRow>
            <BaseUrl>[ Base URL: localhost:8765/CUSTOMER-PRODUCER ]</BaseUrl>
            <Link $size={12.5} $ls={0.216}>http://localhost:8765/CUSTOMER-PRODUCER/v2/api-docs</Link>
            <Description>API reference guide BANK Application using MICROSERVICES</Description>
            <Link $size={13.5} $ls={0.1}>Terms of service</Link>
            <TagHeader>
              <Text $size={22} $weight={700} $color="#3b4151" $ls={-0.75}>producer-controller</Text>
              <Cell $w={11} />
              <Text $size={13.5} $color="#3b4151" $ls={0.17}>Producer Controller</Text>
              <Spacer />
              <ChevronThin w={19} s={1.300} />
            </TagHeader>
            <OpList>
              {operations.map((o) => (
                <Operation key={o.method} $border={o.b} $bg={o.bg}>
                  <Method $bg={o.c}>{o.method}</Method>
                  <Path>{o.path}</Path>
                  <Text $size={12.5} $color="#3b4151" $ls={o.ls}>{o.summary}</Text>
                </Operation>
              ))}
            </OpList>
          </Content>
        </Page>
        <ScrollTrack>
          <ScrollButton $h={27}><Triangle up /></ScrollButton>
          <ScrollThumb />
          <ScrollButton $h={25}><Triangle /></ScrollButton>
        </ScrollTrack>
      </PageRow>
    </Browser>
  );
}

const DarkLine = ({ split }) => <Underline $h={2} $a="#69a9e8" $b="#4a7dab" $split={split} />;
const BlueLine = ({ split }) => <Underline $h={3} $a="#0078d7" $b="#66abe4" $split={split} />;

function RemoteTaskbar() {
  return (
    <Taskbar $h={49} $bg="#101010">
      <TaskItem $w={60}><TaskIcon><Windows c="#fff" /></TaskIcon></TaskItem>
      <TaskItem $w={61}><TaskIcon $pt={0}><Search c="#ddd" /></TaskIcon></TaskItem>
      <TaskItem $w={60}><TaskIcon $pt={0}><TaskView c="#ddd" /></TaskIcon></TaskItem>
      <TaskItem $w={61} $ml={4}><TaskIcon><Edge /></TaskIcon></TaskItem>
      <TaskItem $w={50} $ml={6}><TaskIcon><Folder /></TaskIcon><DarkLine split={78} /></TaskItem>
      <TaskItem $w={50} $ml={12}><TaskIcon $pt={0}><RunIcon /></TaskIcon></TaskItem>
      <TaskItem $w={60} $ml={6} $bg="linear-gradient(to right, #333 55px, #242424 55px, #242424 56px, #2d2d2d 56px)"><TaskIcon><Chrome /></TaskIcon><DarkLine split={92} /></TaskItem>
      <TaskItem $w={50} $ml={7}><TaskIcon $pt={0}><Notepad /></TaskIcon><DarkLine split={78} /></TaskItem>
      <TaskItem $w={50} $ml={12}><TaskIcon><SpringTool /></TaskIcon><DarkLine /></TaskItem>
      <Spacer />
      <Cell $w={30}><ChevronThin up c="#e8e8e8" w={15} /></Cell>
      <Cell $w={31}><Monitor /></Cell>
      <Cell $w={29}><Muted /></Cell>
      <Cell $w={45}><Text $color="#f0f0f0" $ls={-0.65}>ENG</Text></Cell>
      <Clock $w={88}>
        <Text $color="#f0f0f0" $ls={-0.8}>11:06</Text>
        <Text $color="#f0f0f0" $ls={-0.42}>26-11-2021</Text>
      </Clock>
      <ShowDesktop $c="#777" $ml={1} />
    </Taskbar>
  );
}

function HostTaskbar() {
  return (
    <Taskbar $h={50} $bg="#d8d8d8">
      <TaskItem $w={60}><TaskIcon $pt={0}><Windows c="#000" /></TaskIcon></TaskItem>
      <SearchBox><Search c="#111" /><SearchHint>Type here to search</SearchHint></SearchBox>
      <TaskItem $w={62}><TaskIcon $pt={0}><Cortana /></TaskIcon></TaskItem>
      <TaskItem $w={59}><TaskIcon $pt={0}><TaskView c="#111" /></TaskIcon></TaskItem>
      <TaskItem $w={68}><TaskIcon $pt={0}><Edge /></TaskIcon></TaskItem>
      <TaskItem $w={51} $ml={3}><TaskIcon><Folder /></TaskIcon><BlueLine split={80} /></TaskItem>
      <TaskItem $w={60} $ml={6}><TaskIcon><Store /></TaskIcon></TaskItem>
      <TaskItem $w={62}><TaskIcon $pt={0}><MailIcon /><CountBadge $r={-11} $bt={5} $d={21} $size={14}>6</CountBadge></TaskIcon></TaskItem>
      <TaskItem $w={62}><TaskIcon $pt={0}><Chrome /></TaskIcon></TaskItem>
      <TaskItem $w={62}><TaskIcon $pt={0}><Office /></TaskIcon></TaskItem>
      <TaskItem $w={61} $ml={2} $bg="#eeeeee"><TaskIcon $pt={3}><Chrome /><AvatarBadge><Avatar d={20} /></AvatarBadge></TaskIcon><BlueLine /></TaskItem>
      <TaskItem $w={51} $ml={6}><TaskIcon><Notepad /></TaskIcon><BlueLine split={80} /></TaskItem>
      <TaskItem $w={51} $ml={11}><TaskIcon $pt={3}><Photos /></TaskIcon><BlueLine /></TaskItem>
      <TaskItem $w={51} $ml={11}><TaskIcon $pt={3}><McAfee /></TaskIcon><BlueLine /></TaskItem>
      <Spacer />
      <Cell $w={32}><Weather /></Cell>
      <Cell $w={58}><Text $size={18} $ls={-0.4}>26°C</Text></Cell>
      <Cell $w={34}><ChevronThin up w={16} /></Cell>
      <Cell $w={28}><Cloud /></Cell>
      <Cell $w={32}><Camera /></Cell>
      <Cell $w={28} $size={24} $color="#000"><MdMic /></Cell>
      <Cell $w={31}><Update /></Cell>
      <Cell $w={30}><Battery /></Cell>
      <Cell $w={30}><Wifi /></Cell>
      <Cell $w={30}><Speaker /></Cell>
      <Cell $w={46}><Text $ls={-0.65}>ENG</Text></Cell>
      <Clock $w={91}>
        <Text $ls={-0.8}>11:06</Text>
        <Text $ls={-0.3}>26-11-2021</Text>
      </Clock>
      <TaskItem $w={50}><TaskIcon><Notification /><CountBadge $r={-11} $bt={3} $d={24} $size={14}>23</CountBadge></TaskIcon></TaskItem>
      <ShowDesktop $c="#a8a8a8" $ml={10} />
    </Taskbar>
  );
}

export default function App() {
  return (
    <Screen>
      <Global />
      <OuterBrowser />
      <BlackBand $h={64} />
      <InnerBrowser />
      <RemoteTaskbar />
      <BlackBand $h={64} />
      <HostTaskbar />
    </Screen>
  );
}
